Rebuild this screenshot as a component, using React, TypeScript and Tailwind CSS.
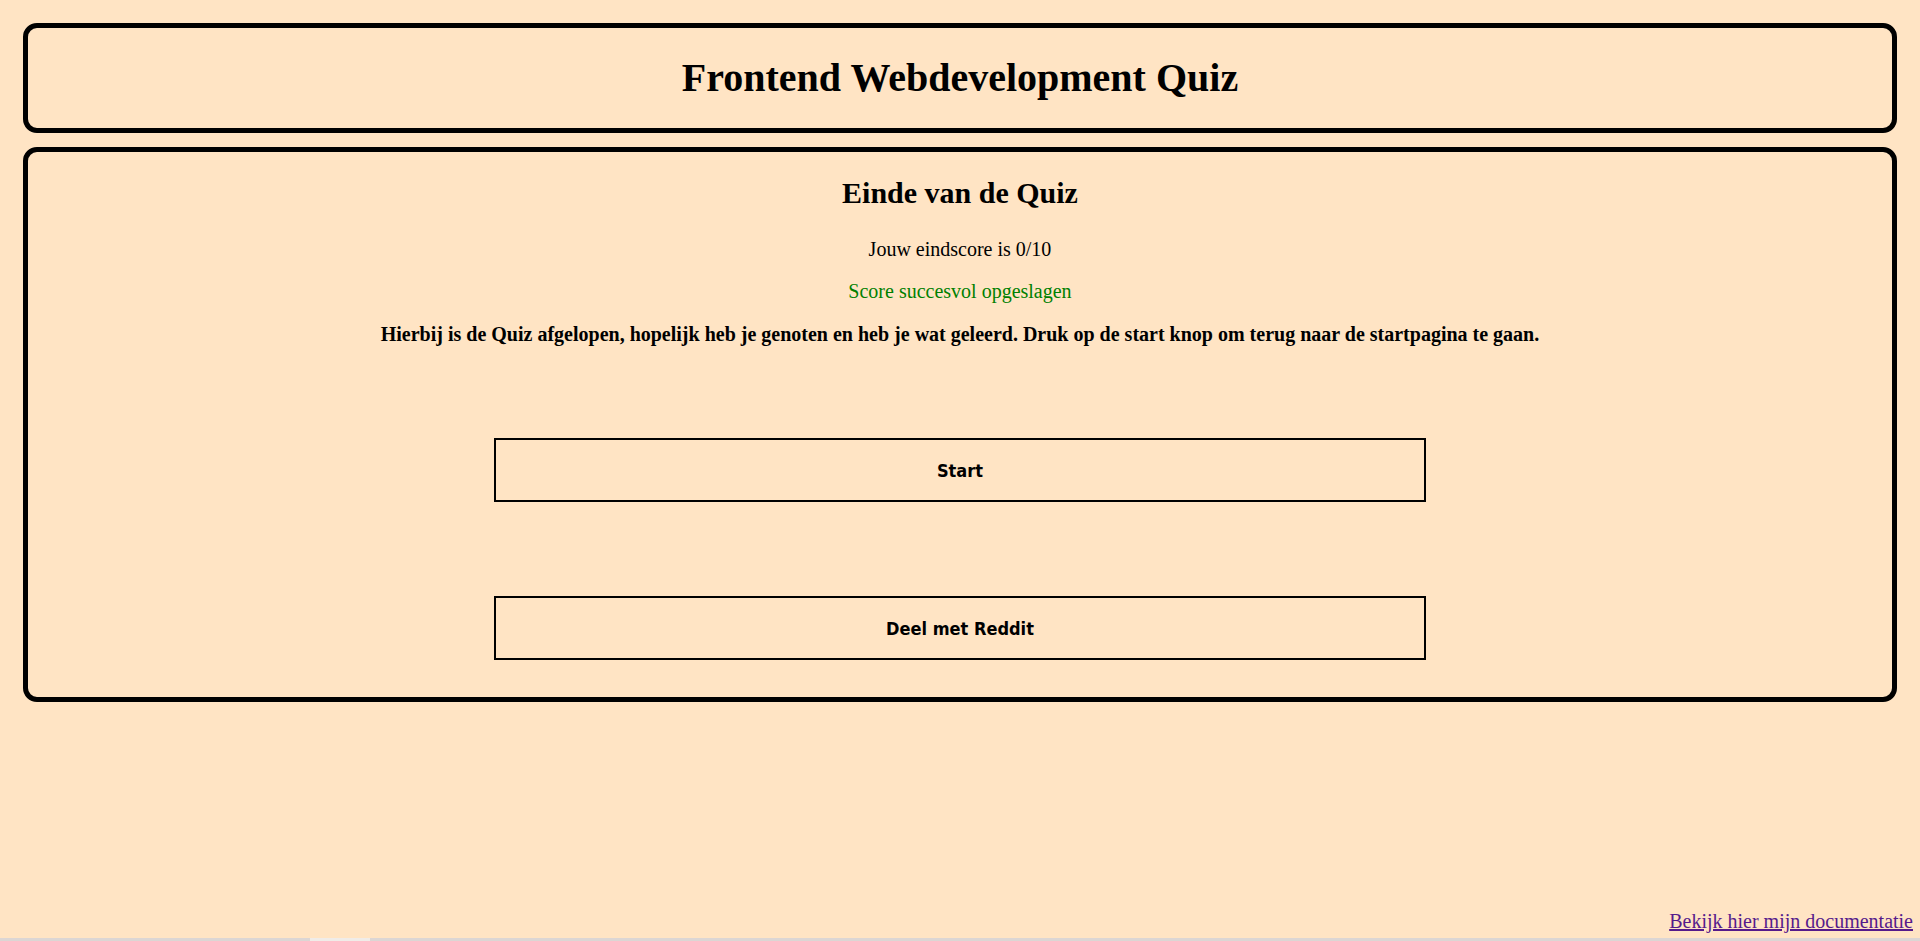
import React from "react";

export default function App() {
  return (
    <div className="min-h-[941px] h-[941px] bg-[#ffe4c4] flex flex-col font-['Liberation_Serif',serif] text-black overflow-hidden">
      <div className="px-[23px] pt-[23px] flex flex-col gap-[14px]">
        <header className="h-[110px] border-[5px] border-black rounded-[14px] flex items-center justify-center">
          <h1 className="text-[40px] font-bold leading-none">Frontend Webdevelopment Quiz</h1>
        </header>
        <main className="border-[5px] border-black rounded-[14px] flex flex-col items-center pt-[24px] pb-[37px]">
          <h2 className="text-[30px] font-bold leading-[34px]">Einde van de Quiz</h2>
          <p className="text-[20px] leading-[24px] mt-[27px]">Jouw eindscore is 0/10</p>
          <p className="text-[20px] leading-[24px] mt-[18px] text-[#008000]">Score succesvol opgeslagen</p>
          <p className="text-[20px] leading-[24px] mt-[19px] font-bold">
            Hierbij is de Quiz afgelopen, hopelijk heb je genoten en heb je wat geleerd. Druk op de start knop om terug naar de startpagina te gaan.
          </p>
          <button className="mt-[92px] w-[932px] h-[64px] border-2 border-black font-['DejaVu_Sans_Condensed','DejaVu_Sans',sans-serif] font-bold text-[18px]">
            Start
          </button>
          <button className="mt-[94px] w-[932px] h-[64px] border-2 border-black font-['DejaVu_Sans_Condensed','DejaVu_Sans',sans-serif] font-bold text-[18px]">
            Deel met Reddit
          </button>
        </main>
      </div>
      <div className="flex-1" />
      <div className="flex justify-end pr-[7px] pb-[5px]">
        <a href="#" className="text-[20px] leading-[24px] text-[#551a8b] underline">
          Bekijk hier mijn documentatie
        </a>
      </div>
      <div className="h-[3px] bg-[#dcd6d4] flex">
        <div className="ml-[310px] w-[60px] bg-[#f0ece8]" />
      </div>
    </div>
  );
}
